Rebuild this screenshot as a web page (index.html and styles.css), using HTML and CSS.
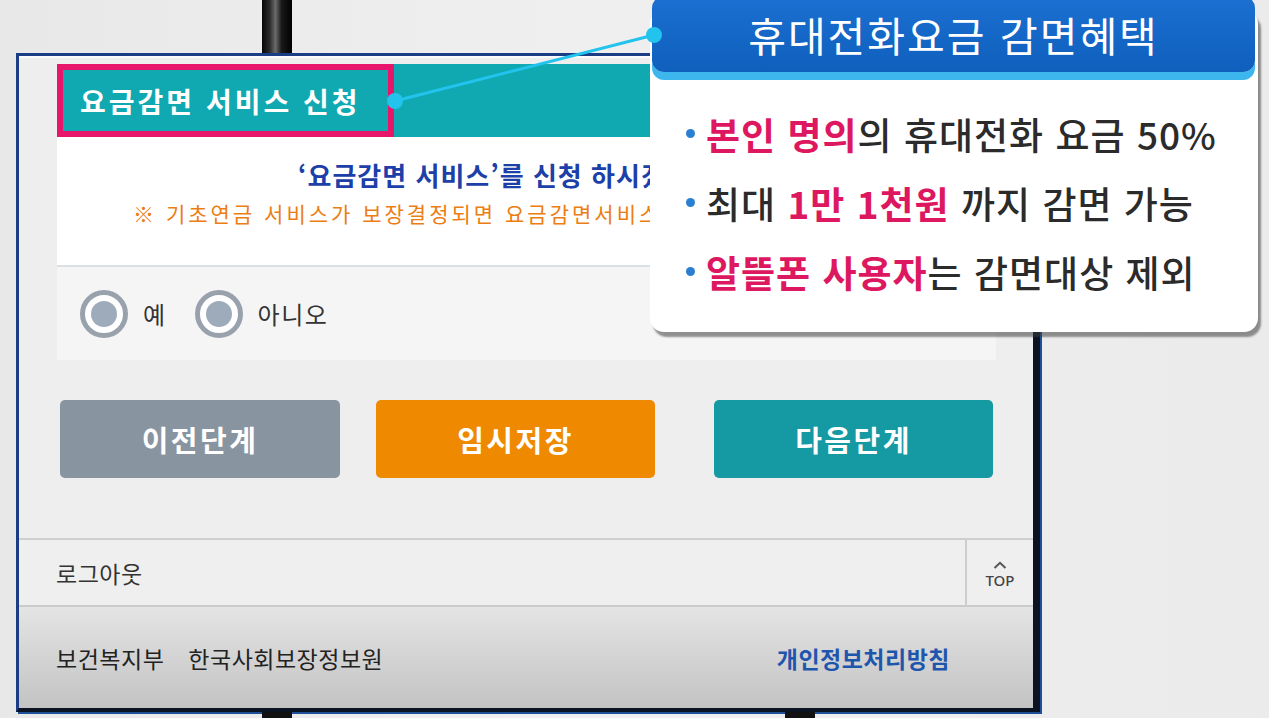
FILE: index.html
```html
<!DOCTYPE html>
<html lang="ko">
<head>
<meta charset="utf-8">
<title>요금감면 서비스 신청</title>
<link rel="stylesheet" href="styles.css">
</head>
<body>
<div class="stage">
  <div class="pole-row"><div class="pole"></div></div>
  <div class="panel">
    <div class="main">
      <div class="head"><div class="head-title">요금감면 서비스 신청</div></div>
      <div class="msg">
        <div class="msg-q">‘요금감면 서비스’를 신청 하시겠습니까?</div>
        <div class="msg-note">※ 기초연금 서비스가 보장결정되면 요금감면서비스를 신청하실 수 있습니다.</div>
      </div>
      <div class="radios">
        <label class="radio"><span class="radio-dot"></span>예</label>
        <label class="radio"><span class="radio-dot"></span>아니오</label>
      </div>
      <div class="btns">
        <div class="btn btn-prev">이전단계</div>
        <div class="btn btn-save">임시저장</div>
        <div class="btn btn-next">다음단계</div>
      </div>
    </div>
    <div class="footer-bar">
      <div class="logout">로그아웃</div>
      <div class="top">
        <svg class="caret" width="14" height="8" viewBox="0 0 14 8"><path d="M1.5 7 L7 1.8 L12.5 7" fill="none" stroke="#555" stroke-width="2"/></svg>
        <span>TOP</span>
      </div>
    </div>
    <div class="footer">
      <div class="orgs"><span>보건복지부</span><span>한국사회보장정보원</span></div>
      <div class="privacy">개인정보처리방침</div>
    </div>
  </div>
  <div class="bottom-row"><div class="stub"></div><div class="stub stub2"></div></div>

  <div class="callout">
    <div class="callout-head">휴대전화요금 감면혜택</div>
    <div class="callout-list">
      <div class="li"><span class="hl">본인 명의</span>의 휴대전화 요금 50%</div>
      <div class="li">최대&nbsp;<span class="hl">1만 1천원</span>&nbsp;까지 감면 가능</div>
      <div class="li"><span class="hl">알뜰폰 사용자</span>는 감면대상 제외</div>
    </div>
  </div>

  <svg class="connector" width="1269" height="718" viewBox="0 0 1269 718">
    <line x1="395" y1="101" x2="654" y2="35" stroke="#22c4ed" stroke-width="3"/>
    <circle cx="395" cy="101" r="8" fill="#22c4ed"/>
    <circle cx="654" cy="35" r="8" fill="#22c4ed"/>
  </svg>
</div>
</body>
</html>
```

FILE: styles.css
```css
* { box-sizing: border-box; }
html, body { margin: 0; padding: 0; }
body {
  width: 1269px;
  height: 718px;
  overflow: hidden;
  background: #ebebeb;
  font-family: "Noto Sans CJK KR", "Noto Sans", sans-serif;
}
.stage {
  position: relative;
  width: 1269px;
  height: 718px;
  display: flex;
  flex-direction: column;
  background: linear-gradient(90deg, #e8e8e8 0%, #efefef 45%, #ebebeb 100%);
}
.pole-row { height: 53px; flex: none; padding-left: 262px; }
.pole {
  width: 30px;
  height: 100%;
  background: linear-gradient(90deg, #050505 0%, #2a2a2a 25%, #6a6a6a 45%, #1a1a1a 65%, #000 100%);
}
.panel {
  flex: none;
  margin-left: 16px;
  width: 1024px;
  height: 659px;
  border-top: 3px solid #1a3d86;
  border-left: 3px solid #1a3d86;
  border-right: 7px solid #0b1322;
  border-bottom: 4px solid #0b1322;
  box-shadow: 2px 2px 0 #1e4f98;
  background: #eeeeee;
  display: flex;
  flex-direction: column;
}
.main {
  flex: none;
  height: 482px;
  padding: 6px 37px 0 38px;
  border-top: 2px solid #fafafa;
}
.head { height: 73px; background: #10a9b2; display: flex; }
.head-title {
  width: 337px;
  height: 73px;
  border: 6px solid #e8166b;
  color: #fff;
  font-weight: 700;
  font-size: 28px;
  letter-spacing: 3px;
  padding-left: 17px;
  display: flex;
  align-items: center;
  white-space: nowrap;
}
.msg {
  height: 130px;
  background: #fff;
  border-bottom: 2px solid #dbe0e6;
  text-align: center;
  padding-top: 23px;
  white-space: nowrap;
  overflow: hidden;
}
.msg-q {
  color: #1d3fa8;
  font-size: 26px;
  font-weight: 700;
  line-height: 30px;
  letter-spacing: 1px;
}
.msg-note {
  color: #ec7d12;
  font-size: 21px;
  line-height: 24px;
  margin-top: 11px;
  letter-spacing: 3px;
}
.radios {
  height: 93px;
  background: #f5f5f5;
  display: flex;
  align-items: center;
  padding-left: 23px;
}
.radio {
  display: flex;
  align-items: center;
  gap: 15px;
  margin-right: 28px;
  font-size: 24px;
  letter-spacing: 1.5px;
  color: #333;
}
.radio-dot {
  width: 48px;
  height: 48px;
  border-radius: 50%;
  border: 5px solid #99a2ac;
  background: #fff;
  display: flex;
  align-items: center;
  justify-content: center;
}
.radio-dot::after {
  content: "";
  width: 26px;
  height: 26px;
  border-radius: 50%;
  background: #9eabba;
}
.btns { display: flex; margin-top: 40px; padding-left: 3px; }
.btn {
  width: 280px;
  height: 78px;
  border-radius: 5px;
  color: #fff;
  font-size: 29px;
  font-weight: 700;
  letter-spacing: 2.5px;
  display: flex;
  align-items: center;
  justify-content: center;
}
.btn-prev { background: #8994a1; margin-right: 36px; }
.btn-save { background: #ef8a00; width: 279px; margin-right: 59px; }
.btn-next { background: #1599a3; width: 279px; }

.footer-bar {
  flex: none;
  height: 69px;
  border-top: 2px solid #cfcfcf;
  border-bottom: 2px solid #cbcbcb;
  background: #efefef;
  display: flex;
}
.logout {
  flex: 1;
  display: flex;
  align-items: center;
  padding-left: 37px;
  font-size: 23px;
  letter-spacing: 0.5px;
  color: #333;
}
.top {
  width: 68px;
  border-left: 2px solid #cdcdcd;
  display: flex;
  flex-direction: column;
  align-items: center;
  justify-content: center;
  gap: 3px;
  color: #444;
  font-family: "Noto Sans", sans-serif;
  font-size: 15px;
  font-weight: 500;
  line-height: 16px;
  padding-top: 4px;
}
.footer {
  flex: none;
  height: 101px;
  background: linear-gradient(#e4e4e4, #c3c3c3);
  display: flex;
  align-items: center;
  justify-content: space-between;
  padding: 0 83px 0 37px;
  font-size: 23px;
  letter-spacing: 0.5px;
}
.orgs { display: flex; gap: 24px; color: #222; }
.privacy { color: #1f56ad; font-weight: 700; }
.bottom-row { flex: none; height: 6px; display: flex; padding-left: 262px; }
.stub { width: 30px; height: 100%; background: #111; }
.stub2 { margin-left: 493px; }

.callout {
  position: absolute;
  left: 650px;
  top: 10px;
  width: 608px;
  height: 322px;
  background: #fff;
  border-radius: 14px;
  box-shadow: 3px 5px 2px rgba(60, 60, 60, 0.55);
  z-index: 2;
}
.callout-head {
  margin: -14px 3px 0 2px;
  height: 76px;
  background: linear-gradient(#1b70d1, #0f5fbd);
  border-radius: 12px;
  box-shadow: 0 8px 0 #3db6ee;
  color: #fff;
  font-size: 41px;
  font-weight: 400;
  letter-spacing: 2px;
  display: flex;
  align-items: center;
  justify-content: center;
  white-space: nowrap;
}
.callout-list { margin-top: 27px; padding-left: 36px; }
.li {
  height: 69px;
  display: flex;
  align-items: center;
  font-size: 37px;
  color: #2b2b2b;
  font-weight: 500;
  letter-spacing: 1px;
  white-space: nowrap;
}
.li::before {
  content: "";
  width: 9px;
  height: 9px;
  border-radius: 50%;
  background: #2a7fd0;
  margin-right: 11px;
  flex: none;
}
.hl { color: #dd1760; font-weight: 700; }
.connector {
  position: absolute;
  left: 0;
  top: 0;
  z-index: 3;
  pointer-events: none;
}
```
